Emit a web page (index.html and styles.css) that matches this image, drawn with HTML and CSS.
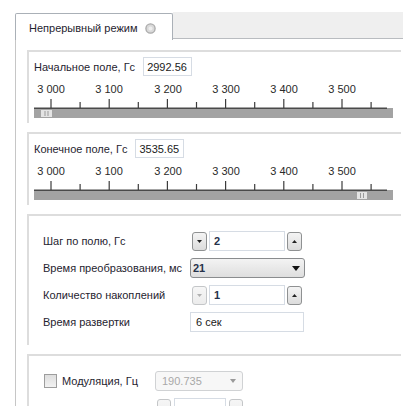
FILE: index.html
```html
<!DOCTYPE html>
<html lang="ru">
<head>
<meta charset="utf-8">
<title>Непрерывный режим</title>
<link rel="stylesheet" href="styles.css">
</head>
<body>
<div class="tabbar">
  <div class="tab">
    <span class="tab-title">Непрерывный режим</span>
    <svg class="tab-close" width="11" height="11" viewBox="0 0 11 11">
      <circle cx="5.5" cy="5.5" r="4.6" fill="#d9d9d9" stroke="#a9a9a9" stroke-width="1.3"/>
      <circle cx="5.5" cy="5.5" r="2" fill="#eeeeee"/>
    </svg>
  </div>
  <div class="tab-fill"></div>
</div>

<div class="panel">
  <section class="group group-field">
    <div class="field-row">
      <span class="label">Начальное поле, Гс</span>
      <span class="input value-input">2992.56</span>
    </div>
    <div class="scale">
      <span class="scale-label" style="left:17px">3 000</span>
      <span class="scale-label" style="left:75px">3 100</span>
      <span class="scale-label" style="left:134px">3 200</span>
      <span class="scale-label" style="left:192px">3 300</span>
      <span class="scale-label" style="left:250px">3 400</span>
      <span class="scale-label" style="left:308px">3 500</span>
    </div>
    <svg class="slider" width="359" height="19" viewBox="0 0 359 19">
      <rect x="0" y="9" width="359" height="10" fill="#a3a3a3"/>
      <rect x="0" y="8.5" width="353" height="1.5" fill="#4a4a4a"/>
      <g stroke="#3c3c3c" stroke-width="1.2">
        <line x1="17" y1="0" x2="17" y2="9"/><line x1="75.2" y1="0" x2="75.2" y2="9"/>
        <line x1="133.4" y1="0" x2="133.4" y2="9"/><line x1="191.6" y1="0" x2="191.6" y2="9"/>
        <line x1="249.8" y1="0" x2="249.8" y2="9"/><line x1="308" y1="0" x2="308" y2="9"/>
        <line x1="46.1" y1="3" x2="46.1" y2="9"/><line x1="104.3" y1="3" x2="104.3" y2="9"/>
        <line x1="162.5" y1="3" x2="162.5" y2="9"/><line x1="220.7" y1="3" x2="220.7" y2="9"/>
        <line x1="278.9" y1="3" x2="278.9" y2="9"/><line x1="337.1" y1="3" x2="337.1" y2="9"/>
      </g>
      <g transform="translate(7 11)">
        <rect width="11" height="7" fill="#e4e4e4"/>
        <line x1="4" y1="1" x2="4" y2="6" stroke="#9a9a9a"/>
        <line x1="7" y1="1" x2="7" y2="6" stroke="#9a9a9a"/>
      </g>
    </svg>
  </section>

  <section class="group group-field">
    <div class="field-row">
      <span class="label">Конечное поле, Гс</span>
      <span class="input value-input">3535.65</span>
    </div>
    <div class="scale">
      <span class="scale-label" style="left:17px">3 000</span>
      <span class="scale-label" style="left:75px">3 100</span>
      <span class="scale-label" style="left:134px">3 200</span>
      <span class="scale-label" style="left:192px">3 300</span>
      <span class="scale-label" style="left:250px">3 400</span>
      <span class="scale-label" style="left:308px">3 500</span>
    </div>
    <svg class="slider" width="359" height="19" viewBox="0 0 359 19">
      <rect x="0" y="9" width="359" height="10" fill="#a3a3a3"/>
      <rect x="0" y="8.5" width="353" height="1.5" fill="#4a4a4a"/>
      <g stroke="#3c3c3c" stroke-width="1.2">
        <line x1="17" y1="0" x2="17" y2="9"/><line x1="75.2" y1="0" x2="75.2" y2="9"/>
        <line x1="133.4" y1="0" x2="133.4" y2="9"/><line x1="191.6" y1="0" x2="191.6" y2="9"/>
        <line x1="249.8" y1="0" x2="249.8" y2="9"/><line x1="308" y1="0" x2="308" y2="9"/>
        <line x1="46.1" y1="3" x2="46.1" y2="9"/><line x1="104.3" y1="3" x2="104.3" y2="9"/>
        <line x1="162.5" y1="3" x2="162.5" y2="9"/><line x1="220.7" y1="3" x2="220.7" y2="9"/>
        <line x1="278.9" y1="3" x2="278.9" y2="9"/><line x1="337.1" y1="3" x2="337.1" y2="9"/>
      </g>
      <g transform="translate(323 11)">
        <rect width="10" height="7" fill="#e4e4e4"/>
        <line x1="3.5" y1="1" x2="3.5" y2="6" stroke="#9a9a9a"/>
        <line x1="6.5" y1="1" x2="6.5" y2="6" stroke="#9a9a9a"/>
      </g>
    </svg>
  </section>

  <section class="group group-params">
    <div class="param-row">
      <span class="param-label">Шаг по полю, Гс</span>
      <div class="spin">
        <span class="spin-btn"><svg width="5" height="3" viewBox="0 0 5 3"><path d="M0 0h5L2.5 3z" fill="#222"/></svg></span>
        <span class="input spin-input">2</span>
        <span class="spin-btn"><svg width="5" height="3" viewBox="0 0 5 3"><path d="M0 3h5L2.5 0z" fill="#222"/></svg></span>
      </div>
    </div>
    <div class="param-row">
      <span class="param-label">Время преобразования, мс</span>
      <div class="combo">
        <span class="combo-text">21</span>
        <svg width="8" height="5" viewBox="0 0 8 5"><path d="M0 0h8L4 5z" fill="#111"/></svg>
      </div>
    </div>
    <div class="param-row">
      <span class="param-label">Количество накоплений</span>
      <div class="spin">
        <span class="spin-btn is-disabled"><svg width="5" height="3" viewBox="0 0 5 3"><path d="M0 0h5L2.5 3z" fill="#b0b0b0"/></svg></span>
        <span class="input spin-input">1</span>
        <span class="spin-btn"><svg width="5" height="3" viewBox="0 0 5 3"><path d="M0 3h5L2.5 0z" fill="#222"/></svg></span>
      </div>
    </div>
    <div class="param-row">
      <span class="param-label">Время развертки</span>
      <span class="input wide-input">6 сек</span>
    </div>
  </section>

  <section class="group group-mod">
    <div class="mod-row">
      <label class="check">
        <span class="check-box"></span>
        <span class="check-text">Модуляция, Гц</span>
      </label>
      <div class="combo is-disabled">
        <span class="combo-text">190.735</span>
        <svg width="6" height="4" viewBox="0 0 6 4"><path d="M0 0h6L3 4z" fill="#9a9a9a"/></svg>
      </div>
    </div>
    <div class="mod-row mod-row-2">
      <div class="spin small-spin">
        <span class="spin-btn is-disabled"></span>
        <span class="input spin-input"></span>
        <span class="spin-btn is-disabled"></span>
      </div>
    </div>
  </section>
</div>
</body>
</html>
```

FILE: styles.css
```css
* { box-sizing: border-box; }

html, body {
  margin: 0;
  background: #ffffff;
  overflow: hidden;
}

body {
  font-family: "Liberation Sans", Arial, sans-serif;
  font-size: 11px;
  color: #1f2430;
  width: 403px;
  height: 406px;
}

/* tab strip */
.tabbar {
  display: flex;
  padding: 12px 0 0 15px;
  height: 40px;
}

.tab {
  width: 158px;
  margin-top: 1px;
  display: flex;
  align-items: center;
  padding: 2px 0 0 13px;
  gap: 8px;
  background: #ffffff;
  border: 1px solid #aab0b7;
  border-bottom: none;
  border-radius: 2px 2px 0 0;
}

.tab-title { white-space: nowrap; }

.tab-fill {
  flex: 1;
  background: #efefef;
  border-bottom: 1px solid #b9bcc0;
  margin-bottom: 1px;
}

/* tab page */
.panel {
  margin-left: 15px;
  border-left: 1px solid #c6c6c6;
  padding: 10px 0 0 11px;
  height: 366px;
}

.group {
  width: 374px;
  border-top: 2px solid #dddddd;
  border-left: 2px solid #dddddd;
  margin-bottom: 9px;
}

.group-field {
  padding: 5px 0 5px 5px;
}

.field-row {
  display: flex;
  align-items: center;
  gap: 8px;
  height: 19px;
}

.input {
  display: flex;
  align-items: center;
  background: #ffffff;
  border: 1px solid #d6dce4;
  color: #1a1a1a;
  white-space: nowrap;
}

.value-input {
  width: 49px;
  height: 19px;
  padding-left: 3px;
}

.scale {
  position: relative;
  height: 13px;
  margin-top: 7px;
  line-height: 13px;
}

.scale-label {
  position: absolute;
  top: 0;
  transform: translateX(-50%);
  white-space: nowrap;
  color: #2a2a2a;
}

.slider {
  display: block;
  margin-top: 3px;
}

/* parameter rows */
.group-params {
  padding: 15px 0 13px 14px;
  display: flex;
  flex-direction: column;
  gap: 7px;
}

.param-row {
  display: flex;
  align-items: center;
  height: 20px;
}

.param-label {
  width: 147px;
  white-space: nowrap;
}

.spin {
  display: flex;
  align-items: center;
  width: 114px;
  height: 20px;
  gap: 2px;
  padding-left: 2px;
}

.spin-btn {
  display: flex;
  align-items: center;
  justify-content: center;
  width: 15px;
  height: 19px;
  border: 1px solid #8f9192;
  border-radius: 3px;
  background: linear-gradient(#f4f4f4, #dcdcdc);
}

.spin-btn.is-disabled {
  border-color: #c4c6c8;
  background: linear-gradient(#f6f6f6, #ececec);
}

.spin-input {
  width: 76px;
  height: 20px;
  padding-left: 4px;
  font-weight: bold;
  color: #27324a;
}

.combo {
  display: flex;
  align-items: center;
  justify-content: space-between;
  width: 115px;
  height: 20px;
  padding: 0 4px 0 2px;
  border: 1px solid #8a8c8e;
  border-radius: 3px;
  background: linear-gradient(#f3f3f3, #dedede);
}

.combo-text {
  font-weight: bold;
  color: #27324a;
}

.wide-input {
  width: 114px;
  height: 20px;
  padding-left: 5px;
}

/* modulation */
.group-mod {
  padding: 15px 0 0 15px;
  display: flex;
  flex-direction: column;
  gap: 7px;
}

.mod-row {
  display: flex;
  align-items: center;
  height: 20px;
}

.check {
  display: flex;
  align-items: center;
  gap: 5px;
  width: 111px;
}

.check-box {
  width: 13px;
  height: 14px;
  border: 1px solid #9d9d9d;
  background: linear-gradient(#dedede, #f2f2f2);
}

.check-text { white-space: nowrap; }

.combo.is-disabled {
  width: 88px;
  border-color: #d0d2d4;
  background: #f7f7f7;
  padding: 0 6px 0 6px;
}

.combo.is-disabled .combo-text {
  font-weight: normal;
  color: #a8a8a8;
}

.mod-row-2 {
  padding-left: 113px;
}

.small-spin {
  width: auto;
  padding-left: 0;
  gap: 3px;
}

.small-spin .spin-btn { width: 14px; }
.small-spin .spin-input { width: 52px; }
```
